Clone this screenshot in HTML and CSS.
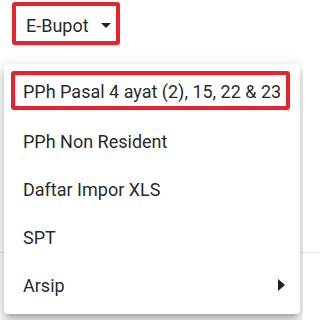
FILE: index.html
```html
<!DOCTYPE html>
<html>
<head>
<meta charset="utf-8">
<link rel="stylesheet" href="styles.css">
</head>
<body>
<div class="page">
  <div class="header">
    <div class="trigger">
      <span class="trigger-label">E-Bupot</span>
      <svg class="caret" width="10" height="5" viewBox="0 0 10 5"><path d="M0 0h10L5 5z" fill="#212121"/></svg>
    </div>
  </div>
  <div class="menu">
    <div class="item item-active">PPh Pasal 4 ayat (2), 15, 22 &amp; 23</div>
    <div class="item">PPh Non Resident</div>
    <div class="item">Daftar Impor XLS</div>
    <div class="item">SPT</div>
    <div class="item item-sub">
      <span>Arsip</span>
      <svg class="sub-arrow" width="7" height="12" viewBox="0 0 7 12"><path d="M0 0l7 6-7 6z" fill="#212121"/></svg>
    </div>
  </div>
</div>
</body>
</html>
```
FILE: styles.css
```css
html, body {
  margin: 0;
  padding: 0;
}
body {
  width: 303px;
  height: 320px;
  overflow: hidden;
  background: linear-gradient(to bottom, transparent 252px, #e2e2e2 252px, #e2e2e2 253px, transparent 253px) #fff;
  font-family: Roboto, "Liberation Sans", sans-serif;
  color: rgba(0, 0, 0, 0.87);
}
.header {
  padding: 2px 0 0 12px;
  height: 64px;
  box-sizing: border-box;
}
.trigger {
  display: inline-flex;
  align-items: center;
  box-sizing: border-box;
  width: 108px;
  height: 43px;
  border: 4px solid #e9222c;
  border-radius: 3px;
  padding: 3px 0 0 10px;
  gap: 12px;
}
.trigger-label {
  font-size: 18px;
}
.caret {
  display: block;
  margin-top: 0;
}
.menu {
  margin-left: 4px;
  width: 296px;
  margin-top: 0;
  box-sizing: border-box;
  padding: 7px 0 6px;
  background: #fff;
  border-radius: 4px;
  box-shadow: 0 5px 5px -3px rgba(0,0,0,.2), 0 8px 10px 1px rgba(0,0,0,.14), 0 3px 14px 2px rgba(0,0,0,.12);
}
.item {
  display: flex;
  align-items: center;
  box-sizing: border-box;
  height: 48px;
  padding: 2px 15px 0 19px;
  font-size: 18px;
}
.item-active {
  height: 39px;
  margin: 0 10px 6px 7px;
  padding: 2px 0 0 8px;
  border: 4px solid #e9222c;
  border-radius: 3px;
}
.item-sub {
  justify-content: space-between;
}
.sub-arrow {
  display: block;
}
```
